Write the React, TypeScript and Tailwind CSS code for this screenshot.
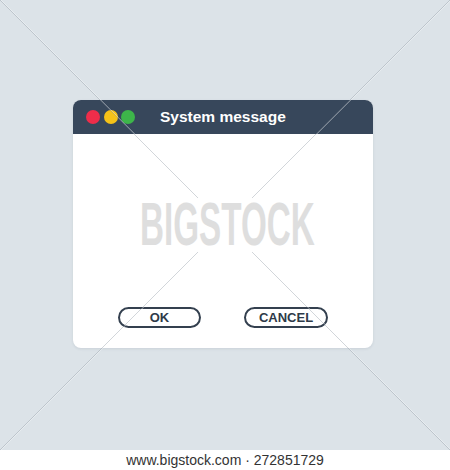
import React from "react";

export default function App() {
  return (
    <div
      className="w-[450px] h-[470px] flex flex-col bg-white"
      style={{ fontFamily: '"Liberation Sans", Arial, sans-serif' }}
    >
      <div className="relative h-[450px] bg-[#dce3e8] pl-[73px] pt-[100px]">
        <div className="w-[300px] h-[248px] flex flex-col rounded-[8px] overflow-hidden bg-white shadow-[0_1px_3px_rgba(40,60,80,0.10)]">
          <div className="h-[34px] bg-[#37475b] flex items-center pl-[13px]">
            <div className="flex items-center gap-[3.5px]">
              <span className="w-[14px] h-[14px] rounded-full bg-[#ee2d4a]" />
              <span className="w-[14px] h-[14px] rounded-full bg-[#f5c218]" />
              <span className="w-[14px] h-[14px] rounded-full bg-[#3db54a]" />
            </div>
            <span className="ml-[25px] text-white font-bold text-[15.5px] leading-none">
              System message
            </span>
          </div>
          <div className="flex-1 flex flex-col justify-end pb-[20px] px-[45px]">
            <div className="flex justify-between">
              <button className="w-[83px] h-[21px] rounded-full border-2 border-[#34404f] flex items-center justify-center text-[13px] font-bold text-[#2e3a48] leading-none">
                OK
              </button>
              <button className="w-[84px] h-[21px] rounded-full border-2 border-[#34404f] flex items-center justify-center text-[13px] font-bold text-[#2e3a48] leading-none">
                CANCEL
              </button>
            </div>
          </div>
        </div>

        <div className="absolute left-[140px] top-[193px] pointer-events-none origin-left scale-x-[0.54] text-[61.5px] leading-none font-bold text-[#dedede] whitespace-nowrap">
          BIGSTOCK
        </div>

        <svg
          className="absolute inset-0 pointer-events-none"
          width="450"
          height="450"
          viewBox="0 0 450 450"
        >
          <g strokeWidth="1" fill="none">
            <line x1="0" y1="0" x2="198" y2="198" stroke="#8f99a2" strokeOpacity="0.4" />
            <line x1="252" y1="252" x2="450" y2="450" stroke="#8f99a2" strokeOpacity="0.4" />
            <line x1="450" y1="0" x2="252" y2="198" stroke="#8f99a2" strokeOpacity="0.4" />
            <line x1="198" y1="252" x2="0" y2="450" stroke="#8f99a2" strokeOpacity="0.4" />
            <line x1="1" y1="0" x2="199" y2="198" stroke="#ffffff" strokeOpacity="0.35" />
            <line x1="253" y1="252" x2="451" y2="450" stroke="#ffffff" strokeOpacity="0.35" />
            <line x1="451" y1="0" x2="253" y2="198" stroke="#ffffff" strokeOpacity="0.35" />
            <line x1="199" y1="252" x2="1" y2="450" stroke="#ffffff" strokeOpacity="0.35" />
          </g>
        </svg>
      </div>
      <div className="h-[20px] flex items-center justify-center text-[14px] text-[#333333] leading-none">
        www.bigstock.com · 272851729
      </div>
    </div>
  );
}
